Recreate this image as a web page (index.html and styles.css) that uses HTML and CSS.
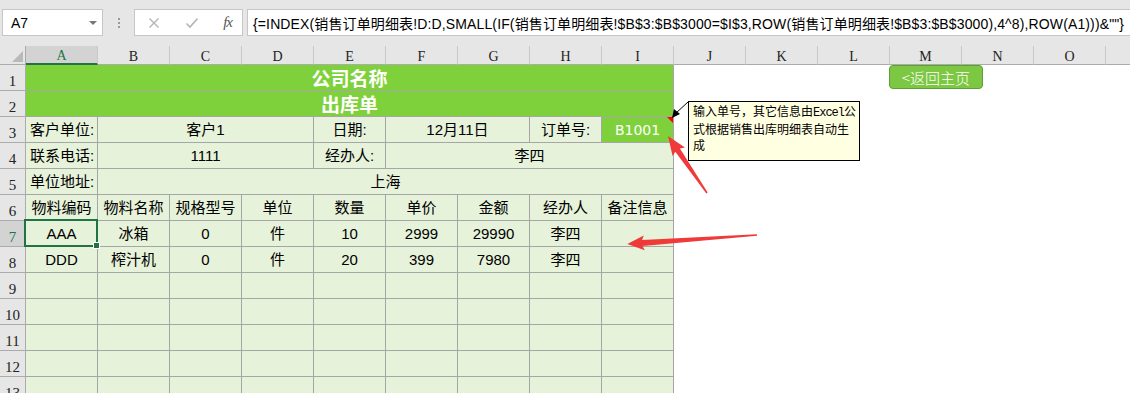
FILE: index.html
```html
<!DOCTYPE html>
<html lang="zh-CN">

<head>
    <meta charset="UTF-8">
    <title>出库单</title>
    <link rel="stylesheet" href="styles.css">
</head>

<body>
    <!-- formula bar -->
    <div class="topbar">
        <div class="namebox">
            <span>A7</span>
            <span class="caret"></span>
        </div>
        <div class="grip">
            <svg width="4" height="12" viewBox="0 0 4 12">
                <rect x="1" y="1" width="2" height="2" fill="#9a9a9a" />
                <rect x="1" y="5" width="2" height="2" fill="#9a9a9a" />
                <rect x="1" y="9" width="2" height="2" fill="#9a9a9a" />
            </svg>
        </div>
        <div class="fxbox">
            <svg class="fx-icon" width="12" height="12" viewBox="0 0 12 12">
                <path d="M1.5 1.5 L10.5 10.5 M10.5 1.5 L1.5 10.5" stroke="#b4b4b4" stroke-width="1.4" fill="none" />
            </svg>
            <svg class="fx-icon" width="14" height="12" viewBox="0 0 14 12">
                <path d="M1.5 6.5 L5 10 L12.5 1.5" stroke="#b4b4b4" stroke-width="1.6" fill="none" />
            </svg>
            <span class="fx">fx</span>
        </div>
        <div class="formula">{=INDEX(销售订单明细表!D:D,SMALL(IF(销售订单明细表!$B$3:$B$3000=$I$3,ROW(销售订单明细表!$B$3:$B$3000),4^8),ROW(A1)))&amp;""}</div>
    </div>

    <!-- sheet -->
    <div class="sheet">
        <div class="corner"><span class="corner-tri"></span></div>
        <div class="ch selected">A</div>
        <div class="ch">B</div>
        <div class="ch">C</div>
        <div class="ch">D</div>
        <div class="ch">E</div>
        <div class="ch">F</div>
        <div class="ch">G</div>
        <div class="ch">H</div>
        <div class="ch">I</div>
        <div class="ch">J</div>
        <div class="ch">K</div>
        <div class="ch">L</div>
        <div class="ch">M</div>
        <div class="ch">N</div>
        <div class="ch">O</div>
        <div class="ch"></div>

        <div class="rh">1</div>
        <div class="c title span9">公司名称</div>

        <div class="rh">2</div>
        <div class="c title span9">出库单</div>

        <div class="rh">3</div>
        <div class="c lbl">客户单位:</div>
        <div class="c span3">客户1</div>
        <div class="c">日期:</div>
        <div class="c span2">12月11日</div>
        <div class="c">订单号:</div>
        <div class="c order">B1001</div>

        <div class="rh">4</div>
        <div class="c lbl">联系电话:</div>
        <div class="c span3">1111</div>
        <div class="c">经办人:</div>
        <div class="c span4">李四</div>

        <div class="rh">5</div>
        <div class="c lbl">单位地址:</div>
        <div class="c span8">上海</div>

        <div class="rh">6</div>
        <div class="c">物料编码</div>
        <div class="c">物料名称</div>
        <div class="c">规格型号</div>
        <div class="c">单位</div>
        <div class="c">数量</div>
        <div class="c">单价</div>
        <div class="c">金额</div>
        <div class="c">经办人</div>
        <div class="c">备注信息</div>

        <div class="rh selected">7</div>
        <div class="c active">AAA</div>
        <div class="c">冰箱</div>
        <div class="c">0</div>
        <div class="c">件</div>
        <div class="c">10</div>
        <div class="c">2999</div>
        <div class="c">29990</div>
        <div class="c">李四</div>
        <div class="c"></div>

        <div class="rh">8</div>
        <div class="c">DDD</div>
        <div class="c">榨汁机</div>
        <div class="c">0</div>
        <div class="c">件</div>
        <div class="c">20</div>
        <div class="c">399</div>
        <div class="c">7980</div>
        <div class="c">李四</div>
        <div class="c"></div>

        <div class="rh">9</div>
        <div class="c"></div><div class="c"></div><div class="c"></div>
        <div class="c"></div><div class="c"></div><div class="c"></div>
        <div class="c"></div><div class="c"></div><div class="c"></div>

        <div class="rh">10</div>
        <div class="c"></div><div class="c"></div><div class="c"></div>
        <div class="c"></div><div class="c"></div><div class="c"></div>
        <div class="c"></div><div class="c"></div><div class="c"></div>

        <div class="rh">11</div>
        <div class="c"></div><div class="c"></div><div class="c"></div>
        <div class="c"></div><div class="c"></div><div class="c"></div>
        <div class="c"></div><div class="c"></div><div class="c"></div>

        <div class="rh">12</div>
        <div class="c"></div><div class="c"></div><div class="c"></div>
        <div class="c"></div><div class="c"></div><div class="c"></div>
        <div class="c"></div><div class="c"></div><div class="c"></div>

        <div class="rh">13</div>
        <div class="c"></div><div class="c"></div><div class="c"></div>
        <div class="c"></div><div class="c"></div><div class="c"></div>
        <div class="c"></div><div class="c"></div><div class="c"></div>
    </div>

    <!-- floating shapes on the sheet -->
    <div class="home-btn">&lt;返回主页</div>

    <div class="comment">输入单号，其它信息由<span class="latin">Excel</span>公<br>式根据销售出库明细表自动生<br>成</div>

    <svg class="overlay" width="1130" height="393" viewBox="0 0 1130 393">
        <!-- comment connector -->
        <line x1="688" y1="102" x2="676" y2="113" stroke="#000" stroke-width="1" />
        <polygon points="672,118 674,109 680,114" fill="#000" />
        <!-- red annotation arrows -->
        <g transform="translate(707,193) rotate(-124.4)">
            <polygon points="0,-0.8 52,-2.8 50,-7.5 69,0 50,7.5 52,2.8 0,0.8" fill="#f03a3a" />
        </g>
        <g transform="translate(757,235) rotate(176)">
            <polygon points="0,-0.8 115,-3 113,-7.5 130,0 113,7.5 115,3 0,0.8" fill="#f03a3a" />
        </g>
    </svg>
</body>

</html>
```

FILE: styles.css
```css
/* Global Styles */
body {
    margin: 0;
    width: 1130px;
    height: 393px;
    overflow: hidden;
    position: relative;
    background-color: #fff;
    font-family: "Liberation Sans", "Noto Sans CJK SC", sans-serif;
    color: #000;
}

/* Formula bar */
.topbar {
    height: 46px;
    box-sizing: border-box;
    padding-top: 9px;
    display: flex;
    align-items: flex-start;
    background-color: #e6e6e6;
}

.namebox {
    margin-left: 2px;
    width: 101px;
    height: 27px;
    box-sizing: border-box;
    padding: 0 5px 0 8px;
    display: flex;
    align-items: center;
    justify-content: space-between;
    background-color: #fff;
    border: 1px solid #c6c6c6;
    font-size: 14px;
}

.caret {
    width: 0;
    height: 0;
    border-left: 4px solid transparent;
    border-right: 4px solid transparent;
    border-top: 4px solid #777;
}

.grip {
    width: 31px;
    height: 27px;
    display: flex;
    align-items: center;
    justify-content: center;
}

.fxbox {
    width: 109px;
    height: 27px;
    box-sizing: border-box;
    padding: 0 10px 0 13px;
    display: flex;
    align-items: center;
    justify-content: space-between;
    background-color: #fff;
    border: 1px solid #c6c6c6;
}

.fx {
    font-family: "Liberation Serif", serif;
    font-style: italic;
    font-size: 15px;
    color: #555;
    letter-spacing: -1px;
}

.formula {
    margin-left: 4px;
    flex: 1;
    height: 27px;
    box-sizing: border-box;
    padding-left: 5px;
    display: flex;
    align-items: center;
    background-color: #fff;
    border: 1px solid #c6c6c6;
    border-right: none;
    font-size: 14px;
    letter-spacing: 0.13px;
    white-space: nowrap;
    overflow: hidden;
}

/* Sheet grid */
.sheet {
    display: grid;
    grid-template-columns: 26px repeat(16, 72px);
    grid-template-rows: 19px;
    grid-auto-rows: 26px;
}

.corner {
    position: relative;
    background-color: #e6e6e6;
    border-right: 1px solid #ababab;
    border-bottom: 1px solid #ababab;
}

.corner-tri {
    position: absolute;
    right: 2px;
    bottom: 2px;
    width: 0;
    height: 0;
    border-left: 11px solid transparent;
    border-bottom: 11px solid #b9b9b9;
}

.ch {
    box-sizing: border-box;
    padding-top: 3px;
    display: flex;
    align-items: center;
    justify-content: center;
    background-color: #e6e6e6;
    border-right: 1px solid #c8c8c8;
    border-bottom: 1px solid #ababab;
    font-family: "Liberation Serif", serif;
    font-size: 14px;
    color: #222;
}

.ch.selected {
    background-color: #d3d3d3;
    border-bottom: 2px solid #217346;
    color: #217346;
}

.rh {
    grid-column: 1;
    box-sizing: border-box;
    padding-bottom: 1px;
    display: flex;
    align-items: flex-end;
    justify-content: center;
    background-color: #e6e6e6;
    border-right: 1px solid #ababab;
    border-bottom: 1px solid #ababab;
    font-family: "Liberation Serif", serif;
    font-size: 15px;
    line-height: 16px;
    color: #222;
}

.rh.selected {
    background-color: #d3d3d3;
    color: #217346;
}

.c {
    box-sizing: border-box;
    display: flex;
    align-items: center;
    justify-content: center;
    background-color: #e6f2d9;
    border-right: 1px solid #a6a6a6;
    border-bottom: 1px solid #a6a6a6;
    font-size: 15px;
    line-height: 18px;
    white-space: nowrap;
}

.span2 { grid-column: span 2; }
.span3 { grid-column: span 3; }
.span4 { grid-column: span 4; }
.span8 { grid-column: span 8; }
.span9 { grid-column: span 9; }

.title {
    background-color: #7fd13b;
    color: #fff;
    font-family: "Noto Sans CJK SC", sans-serif;
    font-weight: bold;
    font-size: 19px;
}

.lbl {
    justify-content: flex-start;
    padding-left: 4px;
}

.order {
    position: relative;
    background-color: #7fd13b;
    color: #fff;
    font-family: "DejaVu Sans", sans-serif;
    font-size: 14px;
}

/* comment marker */
.order::after {
    content: "";
    position: absolute;
    top: 0;
    right: 0;
    width: 0;
    height: 0;
    border-left: 6px solid transparent;
    border-top: 6px solid #f00;
}

.active {
    position: relative;
}

.active::after {
    content: "";
    position: absolute;
    top: -2px;
    left: -2px;
    right: -1px;
    bottom: -1px;
    border: 2px solid #217346;
}

.active::before {
    content: "";
    position: absolute;
    right: -3px;
    bottom: -3px;
    width: 5px;
    height: 5px;
    background-color: #217346;
    border: 1px solid #fff;
    z-index: 1;
}

/* Floating shapes */
.home-btn {
    position: absolute;
    left: 889px;
    top: 65px;
    width: 94px;
    height: 24px;
    box-sizing: border-box;
    display: flex;
    align-items: center;
    justify-content: center;
    background-color: #7dc843;
    border: 1px solid #5e9f33;
    border-radius: 4px;
    color: #fff;
    font-family: "Noto Sans CJK SC", sans-serif;
    font-size: 15px;
    font-weight: 300;
}

.comment {
    position: absolute;
    left: 688px;
    top: 101px;
    width: 172px;
    height: 60px;
    box-sizing: border-box;
    padding: 1px 0 0 4px;
    background-color: #ffffe1;
    border: 1px solid #000;
    font-family: "Noto Sans CJK SC", sans-serif;
    font-size: 12px;
    line-height: 16px;
    white-space: nowrap;
}

.latin {
    font-family: "Liberation Mono", monospace;
    letter-spacing: -1px;
}

.overlay {
    position: absolute;
    left: 0;
    top: 0;
    pointer-events: none;
}
```
